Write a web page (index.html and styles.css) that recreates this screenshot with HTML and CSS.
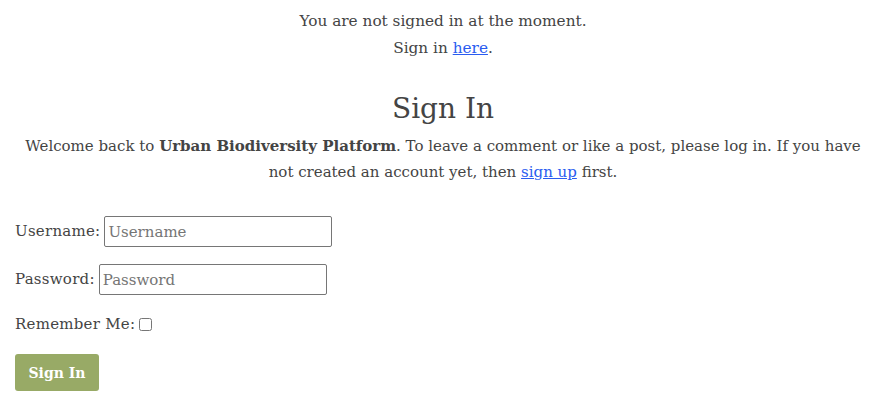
FILE: index.html
```html
<!DOCTYPE html>
<html>
<head>
<meta charset="utf-8">
<link rel="stylesheet" href="styles.css">
</head>
<body>
<main class="page">
  <p class="notice">You are not signed in at the moment.<br>Sign in <a href="#">here</a>.</p>
  <h1 class="title">Sign In</h1>
  <p class="intro"><span>Welcome back to</span> <strong>Urban Biodiversity Platform</strong><span>. To leave a comment or like a post, please log in. If you have</span> <span>not created an account yet, then</span> <a href="#">sign up</a> <span>first.</span></p>
  <form class="form">
    <p class="row"><label class="lbl">Username:</label> <input class="field" type="text" placeholder="Username"></p>
    <p class="row"><label class="lbl">Password:</label> <input class="field" type="password" placeholder="Password"></p>
    <p class="row row-check"><label class="lbl">Remember Me:</label> <input class="check" type="checkbox"></p>
    <button class="btn" type="button">Sign In</button>
  </form>
</main>
</body>
</html>
```
FILE: styles.css
```css
html, body { margin: 0; padding: 0; background: #fff; }
body {
  font-family: "DejaVu Serif", "Liberation Serif", serif;
  font-size: 15px;
  color: #444;
  line-height: 27px;
}
.page { padding: 8px 15px 0; }
a { color: #2a5cf0; }
.notice { margin: 0; text-align: center; font-size: 15.3px; }
.title { margin: 27px 0 0; text-align: center; font-weight: 400; font-size: 28px; line-height: 40px; }
.intro { margin: 4px 0 0; text-align: center; line-height: 26px; }
.intro strong { font-weight: 700; }
.form { margin-top: 31px; }
.row { margin: 0 0 17px; display: flex; align-items: center; gap: 4px; }
.lbl { letter-spacing: 0.25px; }
.row-check { line-height: 22px; padding-top: 1px; margin-bottom: 19px; }
.field {
  width: 228px; height: 31px; box-sizing: border-box;
  border: 1px solid #767676; border-radius: 2px; padding: 1px 3px;
  font-family: inherit; font-size: 15px; color: #444;
}
.field::placeholder { color: #757575; }
.check { margin: 0; width: 13px; height: 13px; }
.btn {
  background: #98aa66; color: #fff; border: 0; border-radius: 3px;
  font-family: inherit; font-weight: 700; font-size: 14px;
  width: 84px; height: 37px; padding: 0;
}
```
